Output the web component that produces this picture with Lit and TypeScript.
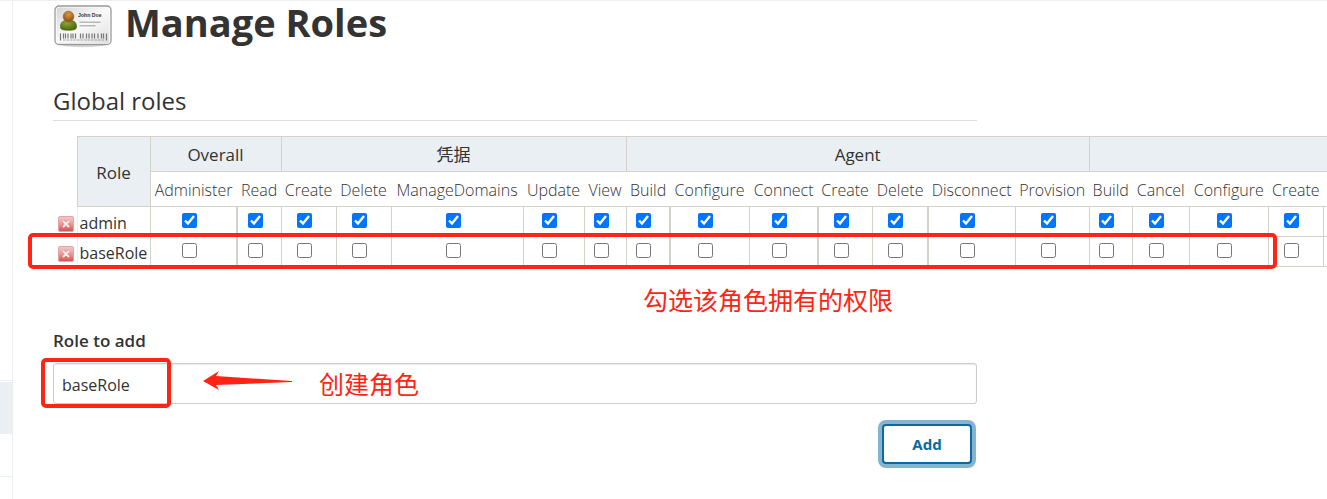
import { LitElement, html, svg, css } from "lit";
import { customElement, state } from "lit/decorators.js";
import { classMap } from "lit/directives/class-map.js";

interface Permission {
  name: string;
  width: number;
  heavy?: boolean;
}

interface Group {
  title: string;
  permissions: Permission[];
}

const GROUPS: Group[] = [
  {
    title: "Overall",
    permissions: [
      { name: "Administer", width: 87, heavy: true },
      { name: "Read", width: 44 },
    ],
  },
  {
    title: "凭据",
    permissions: [
      { name: "Create", width: 55 },
      { name: "Delete", width: 55 },
      { name: "ManageDomains", width: 132 },
      { name: "Update", width: 61 },
      { name: "View", width: 42 },
    ],
  },
  {
    title: "Agent",
    permissions: [
      { name: "Build", width: 44, heavy: true },
      { name: "Configure", width: 79 },
      { name: "Connect", width: 69, heavy: true },
      { name: "Create", width: 54 },
      { name: "Delete", width: 56, heavy: true },
      { name: "Disconnect", width: 87 },
      { name: "Provision", width: 74 },
    ],
  },
  {
    title: "",
    permissions: [
      { name: "Build", width: 43 },
      { name: "Cancel", width: 57 },
      { name: "Configure", width: 79 },
      { name: "Create", width: 55 },
      { name: "", width: 55 },
    ],
  },
];

const COLUMNS = GROUPS.flatMap((g) =>
  g.permissions.map((p) => ({ ...p, group: g.title })),
);

const badgeIcon = svg`
  <defs>
    <linearGradient id="card" x1="0" y1="0" x2="1" y2="1">
      <stop offset="0" stop-color="#d6d6d6" />
      <stop offset="0.5" stop-color="#fafafa" />
      <stop offset="1" stop-color="#dedede" />
    </linearGradient>
    <radialGradient id="head" cx="0.5" cy="0.3" r="0.7">
      <stop offset="0" stop-color="#d69a45" />
      <stop offset="1" stop-color="#8a4f0c" />
    </radialGradient>
    <radialGradient id="torso" cx="0.4" cy="0.3" r="0.8">
      <stop offset="0" stop-color="#8da53a" />
      <stop offset="1" stop-color="#3f6205" />
    </radialGradient>
  </defs>
  <ellipse cx="30" cy="40" rx="21" ry="2.2" fill="#000" opacity="0.16" />
  <rect x="2" y="1" width="56" height="38.5" rx="4" fill="#fff" stroke="#999" stroke-width="1.3" />
  <rect x="3.6" y="2.6" width="52.8" height="35.3" rx="2.5" fill="url(#card)" />
  <path d="M7.500 21c0-3.600 3-6 8-6s8 2.400 8 6c.4 3.500-2 4.300-8 4.300s-8.400-.8-8-4.300z" fill="url(#torso)" stroke="#46650c" stroke-width=".6" />
  <circle cx="15.500" cy="11.500" r="5.400" fill="url(#head)" stroke="#94601f" stroke-width=".5" />
  <path d="M26.500 17.200h21M26.500 20.800h16" stroke="#b8b8b8" stroke-width="1.600" />
  <path d="M7.500 28.500v7M10.500 28.500v5M12.500 28.500v5M15 28.500v5M18 28.500v5M20 28.500v5M22.500 28.500v5M27.500 28.500v5M30 28.500v5M33.500 28.500v5M36 28.500v5M39 28.500v5M41.500 28.500v5M45 28.500v5M48.500 28.500v5M50.500 28.500v5M53.500 28.500v7" stroke="#777" stroke-width="1.200" />
  <path d="M10 35h41" stroke="#999" stroke-width=".9" stroke-dasharray="2.500 1" />
  <text x="25" y="12" font-size="5.200" font-weight="700" font-family="Liberation Sans, sans-serif" fill="#333">John Doe</text>
`;

const deleteIcon = html`<svg width="16" height="16" viewBox="0 0 16 16" aria-hidden="true">
  <defs>
    <linearGradient id="red" x1="0" y1="0" x2="0" y2="1">
      <stop offset="0" stop-color="#f3c9c9" />
      <stop offset="0.5" stop-color="#ea9a9a" />
      <stop offset="1" stop-color="#da4b4b" />
    </linearGradient>
  </defs>
  <rect x="0.500" y="0.500" width="15" height="15" rx="1.500" fill="url(#red)" stroke="#e3a5a5" />
  <path d="M5 5l6 6M11 5l-6 6" stroke="#c66" stroke-width="3.600" opacity=".35" />
  <path d="M5 5l6 6M11 5l-6 6" stroke="#fbeeee" stroke-width="2" />
</svg>`;

@customElement("app-root")
export class AppRoot extends LitElement {
  static styles = css`
    :host {
      display: flex;
      min-height: 100vh;
      overflow-x: clip;
      box-sizing: border-box;
      border-top: 1px solid #f0f0f0;
      background: #fff;
      color: #333;
      font-family: "Open Sans", "Noto Sans CJK SC", sans-serif;
      font-size: 16px;
    }
    .rail {
      flex: none;
      width: 12px;
      padding-top: 379px;
      border-right: 1px solid #e9eff2;
    }
    .rail-active {
      height: 52px;
      margin: 1px 0 42px;
      background: #e9eff2;
    }
    .rail-line {
      height: 1px;
      background: #e9eff2;
    }
    main {
      flex: 1;
      min-width: 0;
      padding-left: 40px;
    }
    .content {
      position: relative;
      max-width: 924px;
    }
    .title {
      display: flex;
      align-items: flex-start;
      gap: 12px;
      height: 46px;
    }
    .title svg {
      flex: none;
      margin-top: 4px;
    }
    h1 {
      margin: 0;
      font-size: 38px;
      line-height: 42px;
      font-weight: 700;
      white-space: nowrap;
    }
    h2 {
      margin: 36px 0 15px;
      padding-bottom: 1px;
      border-bottom: 1px solid #ddd;
      font-size: 24px;
      line-height: 36px;
      font-weight: 500;
    }
    .permissions {
      position: relative;
    }
    table {
      width: 1326px;
      table-layout: fixed;
      border-collapse: collapse;
      line-height: 24px;
    }
    th,
    td {
      box-sizing: border-box;
      padding: 0;
      border: 1px solid #d3d3ca;
      text-align: center;
      white-space: nowrap;
    }
    th {
      height: 35px;
      padding-top: 2px;
      font-weight: 400;
    }
    .group {
      background: #e9eff2;
      font-size: 17px;
    }
    .permission {
      font-weight: 300;
      color: #333;
    }
    thead .permission {
      border-left-color: transparent;
      border-right-color: transparent;
    }
    td,
    tbody th {
      height: 30px;
    }
    td {
      padding-right: 8px;
    }
    .blank {
      border: none;
    }
    .remove {
      padding: 0;
      border: none;
    }
    .remove button {
      display: block;
      margin: 4px 3px 0 auto;
      padding: 0;
      border: 0;
      background: none;
      line-height: 0;
    }
    .name {
      padding: 2px 0 0 2px;
      text-align: left;
      border-left-color: #e9eff2;
    }
    .heavy {
      border-right-width: 2px;
    }
    td input {
      display: block;
      width: 15px;
      height: 15px;
      margin: -2px auto 0;
    }
    .field-label {
      display: block;
      margin: 62px 0 10px;
      font-size: 17px;
      line-height: 24px;
      font-weight: 600;
    }
    .field {
      display: block;
      box-sizing: border-box;
      width: 100%;
      height: 41px;
      padding: 2px 8px 0;
      border: 1px solid #ccc;
      border-radius: 3px;
      box-shadow: inset 0 1px 1px rgba(0, 0, 0, 0.08);
      color: #333;
      font: inherit;
    }
    .add {
      display: block;
      width: 90px;
      height: 40px;
      margin: 20px 5px 0 auto;
      padding: 0;
      border: 2px solid #0b6aa2;
      border-radius: 4px;
      box-shadow: 0 0 0 4px #85b4d0;
      background: #fff;
      color: #0b6aa2;
      font: 700 15px/20px "Noto Sans", sans-serif;
    }
    .frame {
      position: absolute;
      box-sizing: border-box;
      border: 4px solid #ff2414;
      border-radius: 5px;
      pointer-events: none;
    }
    .frame-row {
      top: 97px;
      left: -25px;
      width: 1249px;
      height: 36px;
    }
    .frame-field {
      top: -5px;
      left: -12px;
      width: 130px;
      height: 50px;
    }
    .entry {
      position: relative;
    }
    .note {
      position: absolute;
      color: #ff2414;
      font-family: "Noto Sans CJK SC", sans-serif;
      font-size: 25px;
      line-height: 32px;
      white-space: nowrap;
    }
    .note-row {
      top: 147px;
      left: 590px;
    }
    .note-field {
      top: 4px;
      left: 266px;
    }
    .arrow {
      position: absolute;
      top: 7px;
      left: 149px;
    }
  `;

  @state() private roles = [
    { name: "admin", granted: true },
    { name: "baseRole", granted: false },
  ];

  render() {
    return html`
      <div class="rail">
        <div class="rail-line"></div>
        <div class="rail-active"></div>
        <div class="rail-line"></div>
      </div>
      <main>
        <div class="content">
          <div class="title">
            <svg width="60" height="43" viewBox="0 0 60 43" aria-hidden="true">${badgeIcon}</svg>
            <h1>Manage Roles</h1>
          </div>
          <h2>Global roles</h2>
          <div class="permissions">
            <table>
              <colgroup>
                <col style="width:24px" />
                <col style="width:73px" />
                ${COLUMNS.map((c) => html`<col style="width:${c.width}px" />`)}
              </colgroup>
              <thead>
                <tr>
                  <td class="blank" rowspan="2"></td>
                  <th class="group" rowspan="2">Role</th>
                  ${GROUPS.map(
                    (g) => html`<th class="group" colspan=${g.permissions.length}>${g.title}</th>`,
                  )}
                </tr>
                <tr>
                  ${COLUMNS.map((c) => html`<th class="permission">${c.name}</th>`)}
                </tr>
              </thead>
              <tbody>
                ${this.roles.map(
                  (role) => html`<tr>
                    <td class="remove">
                      <button type="button" aria-label="Delete ${role.name}">${deleteIcon}</button>
                    </td>
                    <th class="name" scope="row">${role.name}</th>
                    ${COLUMNS.map(
                      (c) => html`<td class=${classMap({ heavy: !!c.heavy })}>
                        ${c.name
                          ? html`<input
                              type="checkbox"
                              aria-label="${role.name} ${c.group} ${c.name}"
                              .checked=${role.granted}
                            />`
                          : ""}
                      </td>`,
                    )}
                  </tr>`,
                )}
              </tbody>
            </table>
            <div class="frame frame-row"></div>
            <div class="note note-row">勾选该角色拥有的权限</div>
          </div>
          <label class="field-label" for="role">Role to add</label>
          <div class="entry">
            <input class="field" id="role" type="text" .value=${"baseRole"} />
            <div class="frame frame-field"></div>
            <svg class="arrow" width="92" height="22" viewBox="0 0 92 22" aria-hidden="true">
              <path d="M1 11L17 1L14 6L90 11V12L14 15L17 20Z" fill="#ff2414" />
            </svg>
            <div class="note note-field">创建角色</div>
          </div>
          <button class="add" type="button">Add</button>
        </div>
      </main>
    `;
  }
}
